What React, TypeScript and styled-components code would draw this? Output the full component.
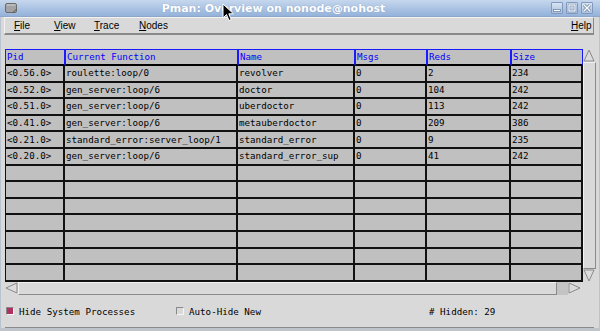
import React from 'react';
import styled, { createGlobalStyle } from 'styled-components';

const GlobalStyle = createGlobalStyle`
  html, body { margin: 0; padding: 0; background: #d9d9d9; }
  * { box-sizing: border-box; }
`;

const MONO = `"DejaVu Sans Mono", "Liberation Mono", monospace`;

const columns = [
  { title: 'Pid', width: 60 },
  { title: 'Current Function', width: 173 },
  { title: 'Name', width: 117 },
  { title: 'Msgs', width: 72 },
  { title: 'Reds', width: 84 },
  { title: 'Size', width: 72 },
];

const processes = [
  ['<0.56.0>', 'roulette:loop/0', 'revolver', '0', '2', '234'],
  ['<0.52.0>', 'gen_server:loop/6', 'doctor', '0', '104', '242'],
  ['<0.51.0>', 'gen_server:loop/6', 'uberdoctor', '0', '113', '242'],
  ['<0.41.0>', 'gen_server:loop/6', 'metauberdoctor', '0', '209', '386'],
  ['<0.21.0>', 'standard_error:server_loop/1', 'standard_error', '0', '9', '235'],
  ['<0.20.0>', 'gen_server:loop/6', 'standard_error_sup', '0', '41', '242'],
];

const ROWS = 13;

const menus = [
  { label: 'File', width: 40 },
  { label: 'View', width: 40 },
  { label: 'Trace', width: 45 },
  { label: 'Nodes', width: 45 },
];

const Mnemonic = ({ text }: { text: string }) => (
  <>
    <u>{text[0]}</u>
    {text.slice(1)}
  </>
);

const Arrow = ({ dir }: { dir: 'up' | 'down' | 'left' | 'right' }) => {
  const pts = {
    up: '6,1 11,12 1,12',
    down: '1,1 11,1 6,12',
    left: '1,6 12,1 12,11',
    right: '1,1 12,6 1,11',
  }[dir];
  return (
    <svg width="13" height="13" viewBox="0 0 13 13">
      <polygon points={pts} fill="#dcdcdc" stroke="#8a8a8a" strokeWidth="1" />
    </svg>
  );
};

export default function App() {
  const rows = Array.from({ length: ROWS }, (_, i) => processes[i] ?? ['', '', '', '', '', '']);

  return (
    <>
      <GlobalStyle />
      <Window>
        <TitleBar>
          <AppIcon>
            <svg width="12" height="10" viewBox="0 0 12 10">
              <rect x="0.5" y="0.5" width="11" height="9" rx="1.5" fill="#a3a3a3" stroke="#6b6b6b" />
              <rect x="1.5" y="1.5" width="9" height="1" fill="#d0d0d0" />
              <path d="M8 9.5 L11.5 6" stroke="#555" />
            </svg>
          </AppIcon>
          <Title>Pman: Overview on nonode@nohost</Title>
          <WinButtons>
            <WinButton>
              <svg width="10" height="10" viewBox="0 0 10 10">
                <rect x="1.5" y="6.5" width="7" height="2" fill="#fff" stroke="#6f86a8" strokeWidth="0.8" />
              </svg>
            </WinButton>
            <WinButton>
              <svg width="10" height="10" viewBox="0 0 10 10">
                <rect x="2" y="2" width="6" height="6" fill="none" stroke="#6f86a8" strokeWidth="2.4" />
                <rect x="2" y="2" width="6" height="6" fill="none" stroke="#fff" strokeWidth="1.2" />
              </svg>
            </WinButton>
            <WinButton>
              <svg width="10" height="10" viewBox="0 0 10 10">
                <path d="M2 2 L8 8 M8 2 L2 8" stroke="#6f86a8" strokeWidth="3" />
                <path d="M2 2 L8 8 M8 2 L2 8" stroke="#fff" strokeWidth="1.4" />
              </svg>
            </WinButton>
          </WinButtons>
        </TitleBar>

        <Frame>
          <MenuBar>
            {menus.map((m) => (
              <MenuItem key={m.label} $w={m.width}>
                <Mnemonic text={m.label} />
              </MenuItem>
            ))}
            <MenuSpacer />
            <MenuItem $w={31}>
              <Mnemonic text="Help" />
            </MenuItem>
          </MenuBar>

          <GridArea>
            <Table>
              {columns.map((c) => (
                <HeadCell key={c.title}>{c.title}</HeadCell>
              ))}
              {rows.map((r, i) =>
                r.map((v, j) => <Cell key={`${i}-${j}`}>{v}</Cell>)
              )}
            </Table>
            <VScroll>
              <ArrowBox>
                <Arrow dir="up" />
              </ArrowBox>
              <VThumb />
              <ArrowBox>
                <Arrow dir="down" />
              </ArrowBox>
            </VScroll>
          </GridArea>

          <HScrollRow>
            <HScroll>
              <ArrowBox>
                <Arrow dir="left" />
              </ArrowBox>
              <HThumb />
              <Trough />
              <ArrowBox>
                <Arrow dir="right" />
              </ArrowBox>
            </HScroll>
            <Corner />
          </HScrollRow>

          <StatusBar>
            <CheckGroup>
              <CheckBox $checked />
              <span>Hide System Processes</span>
            </CheckGroup>
            <CheckGroup>
              <CheckBox />
              <span>Auto-Hide New</span>
            </CheckGroup>
            <span># Hidden: 29</span>
          </StatusBar>
        </Frame>

        <Cursor width="13" height="19" viewBox="0 0 13 19">
          <path d="M1 1 L1 15 L4.5 11.5 L7 17.5 L9.2 16.6 L6.8 10.8 L11.5 10.8 Z" fill="#000" stroke="#fff" strokeWidth="1" />
        </Cursor>
      </Window>
    </>
  );
}

const Window = styled.div`
  position: relative;
  width: 600px;
  height: 331px;
  overflow: hidden;
  display: flex;
  flex-direction: column;
  background: #d9d9d9;
`;

const TitleBar = styled.div`
  height: 17px;
  display: flex;
  align-items: center;
  padding: 0 7px 0 5px;
  background: linear-gradient(#c6d7ed, #94b2da);
  border-bottom: 1px solid #8ea6c8;
`;

const AppIcon = styled.div`
  width: 13px;
  height: 12px;
  display: flex;
  align-items: center;
`;

const Title = styled.div`
  flex: 1;
  text-align: center;
  color: #fff;
  font: bold 11px "DejaVu Sans", sans-serif;
  text-shadow: 0 0 1px #7890b4;
  padding-right: 22px;
`;

const WinButtons = styled.div`
  display: flex;
  gap: 3px;
`;

const WinButton = styled.div`
  width: 12px;
  height: 12px;
  display: flex;
  align-items: center;
  justify-content: center;
  border: 1px solid #8199bd;
  border-radius: 1px;
  background: linear-gradient(#d8e3f2, #a9c1e1);
`;

const Frame = styled.div`
  flex: 1;
  display: flex;
  flex-direction: column;
  padding: 0 5px 0 4px;
  border-left: 1px solid #b9c3cf;
  border-right: 1px solid #b9c3cf;
  border-bottom: 3px solid #bfc4cb;
`;

const MenuBar = styled.div`
  height: 18px;
  margin-left: -1px;
  display: flex;
  align-items: center;
  border-top: 1px solid #f2f2f2;
  border-left: 1px solid #f2f2f2;
  border-right: 1px solid #8a8a8a;
  border-bottom: 2px solid #8a8a8a;
  font: 10px "Liberation Sans", Arial, sans-serif;
  color: #000;
`;

const MenuItem = styled.div<{ $w: number }>`
  width: ${(p) => p.$w}px;
  padding-left: 9px;
  white-space: nowrap;
  u { text-decoration-thickness: 1px; text-underline-offset: 1px; }
`;

const MenuSpacer = styled.div`
  flex: 1;
`;

const GridArea = styled.div`
  margin-top: 14px;
  display: flex;
  height: 233px;
`;

const Table = styled.div`
  width: 578px;
  display: grid;
  grid-template-columns: ${columns.map((c) => `${c.width}px`).join(' ')};
  grid-template-rows: 17px repeat(${ROWS}, 16.6px);
  background: #c0c0c0;
  font: 9.2px ${MONO};
  color: #000;
`;

const HeadCell = styled.div`
  display: flex;
  align-items: center;
  padding: 0 0 1px 1px;
  border: 1px solid #1a1aff;
  border-bottom: 2px solid #000;
  color: #0000ff;
  white-space: nowrap;
  overflow: hidden;
`;

const Cell = styled.div`
  display: flex;
  align-items: center;
  padding: 0 0 1px 1px;
  border-right: 2px solid #111;
  border-bottom: 2px solid #111;
  white-space: nowrap;
  overflow: hidden;

  &:nth-child(6n + 1) {
    border-left: 1px solid #111;
  }
`;

const VScroll = styled.div`
  width: 13px;
  display: flex;
  flex-direction: column;
  background: #c3c3c3;
`;

const ArrowBox = styled.div`
  width: 13px;
  height: 13px;
  flex: none;
  display: flex;
  align-items: center;
  justify-content: center;
  background: #d9d9d9;
`;

const VThumb = styled.div`
  flex: 1;
  background: #d9d9d9;
  border-top: 1px solid #f2f2f2;
  border-left: 1px solid #f2f2f2;
  border-right: 1px solid #8a8a8a;
  border-bottom: 1px solid #8a8a8a;
`;

const HScrollRow = styled.div`
  display: flex;
  height: 13px;
`;

const HScroll = styled.div`
  width: 578px;
  display: flex;
  background: #c3c3c3;
`;

const HThumb = styled.div`
  width: 539px;
  background: #d9d9d9;
  border-top: 1px solid #f2f2f2;
  border-left: 1px solid #f2f2f2;
  border-right: 1px solid #8a8a8a;
  border-bottom: 1px solid #8a8a8a;
`;

const Trough = styled.div`
  flex: 1;
`;

const Corner = styled.div`
  width: 13px;
  background: #d9d9d9;
`;

const StatusBar = styled.div`
  height: 33px;
  display: grid;
  grid-template-columns: 170px 253px auto;
  align-items: center;
  padding: 0 0 0 1px;
  border-bottom: 1px solid #8a8a8a;
  font: 9.2px ${MONO};
  color: #000;
`;

const CheckGroup = styled.div`
  display: flex;
  align-items: center;
  gap: 5px;
`;

const CheckBox = styled.div<{ $checked?: boolean }>`
  width: 8px;
  height: 8px;
  border-top: 1px solid #8a8a8a;
  border-left: 1px solid #8a8a8a;
  border-right: 1px solid #f4f4f4;
  border-bottom: 1px solid #f4f4f4;
  background: ${(p) => (p.$checked ? '#b03060' : '#d9d9d9')};
`;

const Cursor = styled.svg`
  position: absolute;
  left: 222px;
  top: 3px;
`;
